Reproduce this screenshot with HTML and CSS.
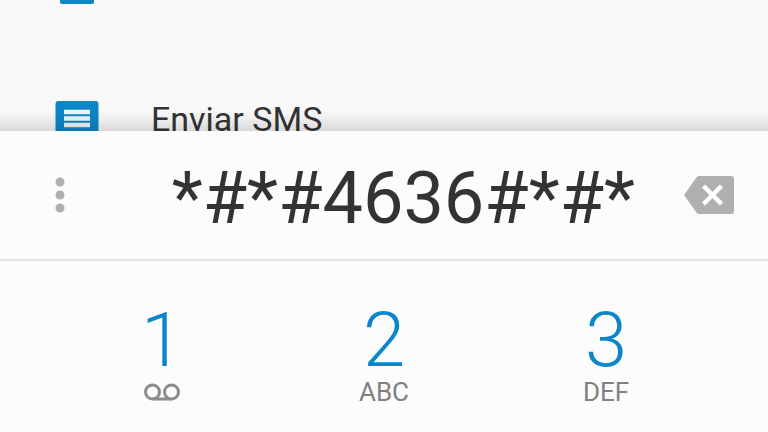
FILE: index.html
```html
<!DOCTYPE html>
<html lang="es">
<head>
  <meta charset="UTF-8">
  <meta name="viewport" content="width=device-width, initial-scale=1.0">
  <title>Teléfono</title>
  <link rel="stylesheet" href="styles.css">
</head>
<body>
  <ul class="actions">
    <li>
      <button type="button" class="action" aria-label="Contacto">
        <svg class="action-icon" viewBox="0 0 44 40" aria-hidden="true">
          <rect x="5" y="0" width="34" height="40" rx="2" fill="#0b86c9"/>
        </svg>
      </button>
    </li>
    <li>
      <button type="button" class="action">
        <svg class="action-icon" viewBox="0 0 44 40" aria-hidden="true">
          <path d="M3.500 1h37q3 0 3 3v28q0 3-3 3H9l-8.500 5V4q0-3 3-3z" fill="#0b86c9"/>
          <path d="M9 12h26M9 18.500h26M9 25h26" stroke="#eef7fc" stroke-width="4.500"/>
        </svg>
        <span>Enviar SMS</span>
      </button>
    </li>
  </ul>

  <main class="dialer">
    <div class="display">
      <button type="button" class="icon-btn" aria-label="Más opciones">
        <svg width="12" height="36" viewBox="0 0 12 36" fill="#b0b0b0">
          <circle cx="6" cy="5" r="4.500"/>
          <circle cx="6" cy="18" r="4.500"/>
          <circle cx="6" cy="31" r="4.500"/>
        </svg>
      </button>
      <input type="tel" class="number" aria-label="Número" value="*#*#4636#*#*">
      <button type="button" class="icon-btn" aria-label="Borrar">
        <svg width="52" height="40" viewBox="0 0 52 40">
          <path d="M16 1h32q3 0 3 3v32q0 3-3 3H16q-2 0-3-2L1 20 13 3q1-2 3-2z" fill="#b0b0b0"/>
          <path d="M20.500 11l18 18M38.500 11l-18 18" stroke="#fff" stroke-width="4.500"/>
        </svg>
      </button>
    </div>

    <div class="keypad">
      <button type="button" class="key">
        <span class="digit">1</span>
        <span class="letters">
          <svg width="36" height="18" viewBox="0 0 36 18" fill="none" stroke="#8c8c8c" stroke-width="3" role="img" aria-label="Buzón de voz">
            <circle cx="8.500" cy="9" r="7"/>
            <circle cx="27.500" cy="9" r="7"/>
            <path d="M8.500 16h19"/>
          </svg>
        </span>
      </button>
      <button type="button" class="key">
        <span class="digit">2</span>
        <span class="letters">ABC</span>
      </button>
      <button type="button" class="key">
        <span class="digit">3</span>
        <span class="letters">DEF</span>
      </button>
    </div>
  </main>
</body>
</html>
```

FILE: styles.css
```css
* {
  margin: 0;
  padding: 0;
  box-sizing: border-box;
}

body {
  display: flex;
  flex-direction: column;
  height: 100vh;
  overflow: hidden;
  font-family: Roboto, sans-serif;
  background-color: #f9f9f9;
  color: #333;
}

button,
input {
  border: none;
  outline: none;
  background: none;
  font-family: inherit;
  color: inherit;
}

button {
  cursor: pointer;
}

/* list is scrolled, the first row is mostly off screen */
.actions {
  flex: 1 1 0;
  min-height: 0;
  margin-top: -84px;
  overflow: hidden;
  list-style: none;
}

.action {
  display: flex;
  align-items: center;
  gap: 52px;
  width: 100%;
  height: 136px;
  padding: 0 55px;
  font-size: 34px;
}

.action-icon {
  width: 44px;
  height: 40px;
}

.action span {
  padding-bottom: 2px;
}

.dialer {
  position: relative;
  background-color: #fcfcfc;
}

/* shadow of the dialer over the list */
.dialer::before {
  content: "";
  position: absolute;
  bottom: 100%;
  left: 0;
  right: 0;
  height: 22px;
  background: linear-gradient(to top, rgba(0, 0, 0, 0.13), rgba(0, 0, 0, 0.04) 60%, transparent);
  pointer-events: none;
}

.display {
  display: flex;
  align-items: center;
  height: 130px;
  padding: 0 33px 0 54px;
  border-bottom: 2px solid #e4e4e4;
}

.icon-btn {
  display: flex;
  flex-shrink: 0;
}

.number {
  flex: 1;
  min-width: 0;
  padding: 8px 48px 0 0;
  font-size: 72px;
  line-height: 86px;
  text-align: right;
}

.keypad {
  display: grid;
  grid-template-columns: repeat(3, 1fr);
  padding: 42px 51px 26px;
}

.key {
  display: flex;
  flex-direction: column;
  align-items: center;
}

.digit {
  font-size: 76px;
  font-weight: 300;
  line-height: 74px;
  color: #0b86c9;
}

.letters {
  display: flex;
  align-items: center;
  height: 29px;
  font-size: 26px;
  color: #808080;
}
```
